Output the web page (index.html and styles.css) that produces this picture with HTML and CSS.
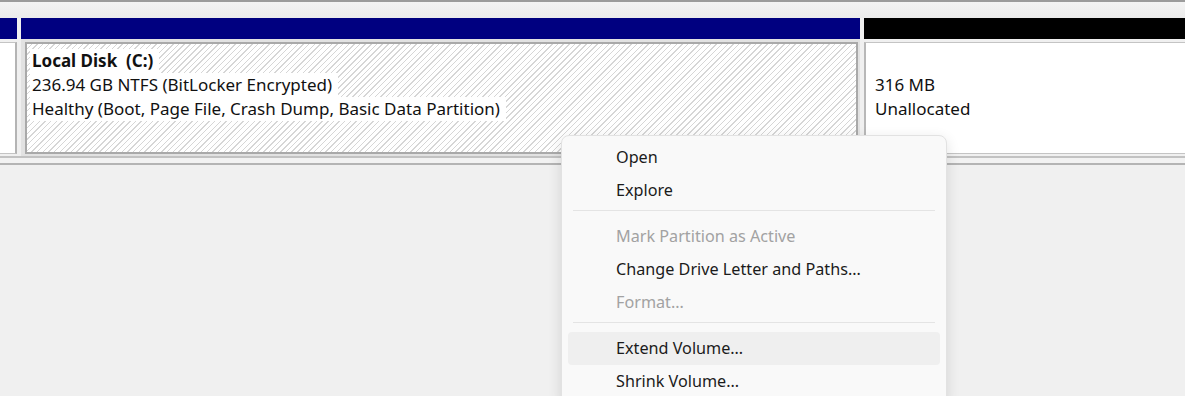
FILE: index.html
```html
<!DOCTYPE html>
<html>
<head>
<meta charset="utf-8">
<link rel="stylesheet" href="styles.css">
</head>
<body>
<div class="top-strip"></div>
<div class="disk-row">
  <div class="part part-left">
    <div class="bar bar-blue"></div>
    <div class="pbody"><div class="box box-white"></div></div>
  </div>
  <div class="part part-main">
    <div class="bar bar-blue"></div>
    <div class="pbody">
      <div class="box box-hatch">
        <span class="line bold">Local Disk&nbsp; (C:)</span>
        <span class="line">236.94 GB NTFS (BitLocker Encrypted)</span>
        <span class="line">Healthy (Boot, Page File, Crash Dump, Basic Data Partition)</span>
      </div>
    </div>
  </div>
  <div class="part part-unalloc">
    <div class="bar bar-black"></div>
    <div class="pbody">
      <div class="box box-white box-center">
        <span class="line">316 MB</span>
        <span class="line">Unallocated</span>
      </div>
    </div>
  </div>
</div>
<div class="row-sep"></div>
<div class="workspace">
  <div class="menu">
    <div class="item">Open</div>
    <div class="item">Explore</div>
    <div class="sep"></div>
    <div class="item disabled">Mark Partition as Active</div>
    <div class="item">Change Drive Letter and Paths…</div>
    <div class="item disabled">Format…</div>
    <div class="sep"></div>
    <div class="item hover">Extend Volume…</div>
    <div class="item">Shrink Volume…</div>
  </div>
</div>
</body>
</html>
```

FILE: styles.css
```css
html, body {
  margin: 0;
  padding: 0;
}
body {
  width: 1185px;
  height: 396px;
  overflow: hidden;
  background: #f0f0f0;
  font-family: "Noto Sans", "Open Sans", sans-serif;
  font-size: 17px;
  color: #111;
  position: relative;
}
.top-strip {
  height: 16px;
  border-top: 2px solid #9c9c9c;
  background: linear-gradient(#f4f4f4, #ececec);
}
.disk-row {
  display: flex;
  gap: 4px;
  background: #f0f0f0;
}
.part {
  display: flex;
  flex-direction: column;
}
.part-left { width: 17px; }
.part-main { width: 839px; }
.part-unalloc { flex: 1; }
.bar {
  height: 21px;
}
.bar-blue { background: #000080; }
.bar-black { background: #000; }
.pbody {
  height: 117px;
  box-sizing: border-box;
  padding: 3px 0 2px 0;
  display: flex;
}
.part-main .pbody {
  padding: 3px 2px 2px 4px;
  background: #e2e2e2;
}
.box {
  flex: 1;
  box-sizing: border-box;
  display: flex;
  flex-direction: column;
  align-items: flex-start;
}
.box-white {
  background: #fff;
  border: 1px solid #c4c4c4;
}
.part-left .box-white {
  border-left: none;
  border-right: 2px solid #b4b4b4;
}
.part-unalloc .box-white {
  border-right: none;
  border-left: 2px solid #b8b8b8;
  padding-left: 7px;
}
.box-hatch {
  border: 2px solid #a9a9a9;
  background: repeating-linear-gradient(135deg, #ffffff 0 3px, #d6d6d6 3px 4px);
  padding: 5px 0 0 3px;
}
.box-center {
  justify-content: center;
  padding-bottom: 2px;
}
.line {
  display: block;
  line-height: 24px;
  height: 24px;
  white-space: nowrap;
  background: #fff;
  padding: 0 6px 0 2px;
}
.bold { font-weight: 700; }
.row-sep {
  height: 5px;
  border-top: 2px solid #c2c2c2;
  border-bottom: 2px solid #b4b4b4;
  background: #f2f2f2;
}
.workspace {
  height: 230px;
  background: #f0f0f0;
}
.menu {
  position: absolute;
  left: 561px;
  top: 135px;
  width: 386px;
  box-sizing: border-box;
  padding: 5px 6px 6px;
  background: #f9f9f9;
  border: 1px solid #e2e2e2;
  border-radius: 8px;
  box-shadow: 0 4px 14px rgba(0, 0, 0, 0.12);
  font-size: 16.2px;
}
.item {
  height: 33px;
  line-height: 33px;
  padding-left: 48px;
  border-radius: 4px;
  color: #1b1b1b;
  white-space: nowrap;
}
.item.disabled { color: #a2a2a2; }
.item.hover { background: #efefef; }
.sep {
  height: 1px;
  margin: 3px 5px 9px;
  background: #e4e4e4;
}
```
